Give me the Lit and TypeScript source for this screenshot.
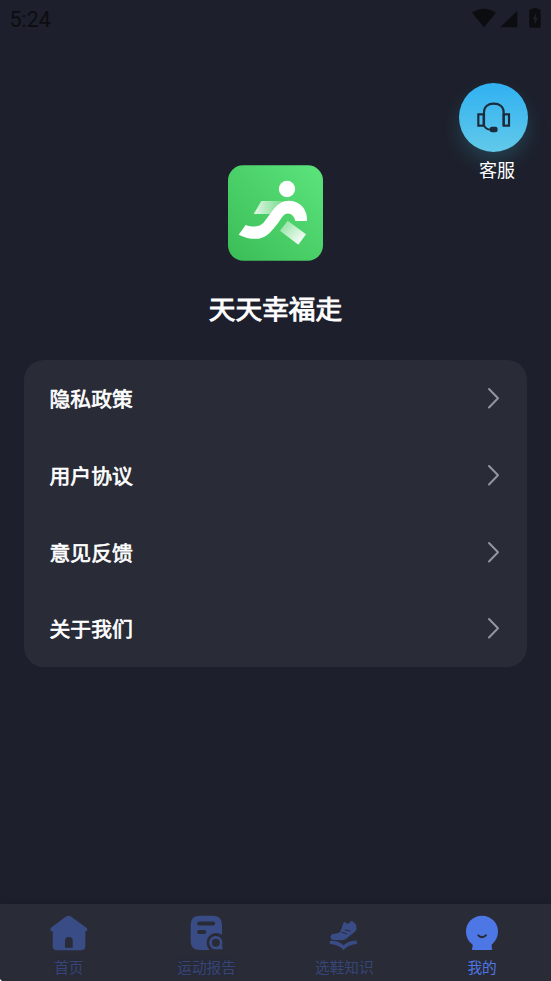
import { LitElement, html, css, svg } from "lit";
import { customElement } from "lit/decorators.js";
import { classMap } from "lit/directives/class-map.js";

const homeIcon = svg`<svg class="glyph" viewBox="138 60 138 108" fill="currentColor">
  <path fill-rule="evenodd" d="M199 64Q207 60 214 65L259 98Q264 103 261 107Q259 109 256 108V153Q256 166 243 166H171Q158 166 158 153V108Q154 110 152 107Q149 102 155 97ZM195 158H218V137Q218 126 206.500 126Q195 126 195 137Z"/>
</svg>`;

const reportIcon = svg`<svg class="glyph" viewBox="138 60 138 108" fill="none">
  <path fill="currentColor" d="M186 62H224Q252 62 252 90V119Q244 113 232 114Q208 118 206 142Q206 156 215 165H186Q158 165 158 137V90Q158 62 186 62Z"/>
  <path d="M183.500 85.500H225.500M183.500 111H199" stroke="#292b37" stroke-width="12" stroke-linecap="round"/>
  <circle cx="233.500" cy="143" r="16" stroke="currentColor" stroke-width="8"/>
  <path fill="currentColor" d="M251 145L254 163H233Q248 161 251 145Z"/>
</svg>`;

const shoeIcon = svg`<svg class="glyph" viewBox="135.500 60 138 108" fill="none">
  <path fill="currentColor" d="M204 81Q206 80 208 82Q216 91 223 81Q226 77 230 79L240 88Q242 92 242 101Q242 106 237 110L211 131Q206 136 195 136L174 135Q164 134 164 126Q165 117 173 117L188 114Q193 112 197 101Z"/>
  <path d="M208 105L222 108M198 112L212 116" stroke="#292b37" stroke-width="3" stroke-linecap="round"/>
  <path fill="currentColor" d="M162 137Q190 136 203 151Q216 136 243 137V147Q218 148 203 165Q188 148 162 147Z"/>
</svg>`;

const faceIcon = svg`<svg class="glyph" viewBox="135 60 138 108" fill="none">
  <path fill="currentColor" d="M204 62C231 62 252 83 252 108C252 126 245 138 233 149V157L235 163Q235 165 231 165H177Q173 165 174 162L176 154V149C163 139 156 126 156 108C156 83 177 62 204 62Z"/>
  <path d="M193 121Q204 132 216 121" stroke="#292b37" stroke-width="6" stroke-linecap="round"/>
</svg>`;

@customElement("status-bar")
class StatusBar extends LitElement {
  static styles = css`
    :host {
      display: flex;
      height: 38px;
      box-sizing: border-box;
      padding: 0 9px 0 9.500px;
      align-items: center;
      justify-content: space-between;
      color: #0c0d11;
      font: 400 21.4px/38px Roboto, sans-serif;
    }
    .time { padding-top: 1px; }
    .signals { width: 70px; height: 22px; display: block; }
  `;
  render() {
    return html`<span class="time">5:24</span>
      <svg class="signals" viewBox="66 24 210 66" fill="currentColor">
        <path d="M66 38Q101 14 138 38L102 82Z" />
        <path d="M202 32V82H151Z" />
        <path fill-rule="evenodd" d="M247 24.500H263V28H268Q272 28 272 32V79Q272 83 268 83H242Q238 83 238 79V32Q238 28 242 28H247ZM258 38L248 58H254V74L263 53H257Z" />
      </svg>`;
  }
}

@customElement("tab-bar")
class TabBar extends LitElement {
  static styles = css`
    :host {
      display: grid;
      grid-template-columns: repeat(4, 1fr);
      height: 76.600px;
      background: #292b37;
      box-shadow: 0 -1px 5px rgba(20, 22, 31, 0.45);
    }
    .tab {
      display: flex;
      flex-direction: column;
      align-items: center;
      padding-top: 10.600px;
      color: #3a4c86;
      font-size: 14.7px;
      line-height: 20px;
    }
    .tab.active { color: #4e77e6; }
    .label { margin-top: 6px; opacity: 0.82; }
    .active .label { opacity: 1; }
    .glyph { width: 46px; height: 36px; display: block; }
  `;
  private tabs = [
    { label: "首页", icon: homeIcon, active: false },
    { label: "运动报告", icon: reportIcon, active: false },
    { label: "选鞋知识", icon: shoeIcon, active: false },
    { label: "我的", icon: faceIcon, active: true },
  ];
  render() {
    return this.tabs.map(
      (t) => html`<div class=${classMap({ tab: true, active: t.active })}>
        ${t.icon}<span class="label">${t.label}</span>
      </div>`
    );
  }
}

@customElement("app-root")
class AppRoot extends LitElement {
  static styles = css`
    :host {
      display: flex;
      flex-direction: column;
      height: 981px;
      background: #1d202c;
      color: #fff;
      font-family: "Noto Sans CJK SC", sans-serif;
      overflow: hidden;
      border-bottom-left-radius: 4px;
    }
    .header { display: grid; height: 322px; }
    .header > * { grid-area: 1 / 1; }
    .service {
      justify-self: end;
      align-self: start;
      margin: 45px 23px 0 0;
      width: 69px;
    }
    .disc {
      height: 69px;
      border-radius: 50%;
      background: linear-gradient(#30b1f2, #62c9e9);
      box-shadow: 0 10px 20px -2px rgba(67, 190, 225, 0.22);
    }
    .disc svg { display: block; width: 69px; height: 69px; }
    .service-label {
      display: block;
      padding-left: 7px;
      margin-top: 5px;
      text-align: center;
      font-size: 18px;
      line-height: 25px;
    }
    .brand {
      display: flex;
      flex-direction: column;
      align-items: center;
      padding-top: 127px;
    }
    .logo { display: block; width: 95px; height: 96px; }
    .name {
      margin: 27px 0 0;
      font-size: 26.7px;
      line-height: 40px;
      font-weight: 400;
      -webkit-text-stroke: 0.9px #fff;
    }
    .menu {
      margin: 0 24.400px;
      border-radius: 20px;
      background: #292b37;
    }
    .row {
      display: flex;
      align-items: center;
      justify-content: space-between;
      height: 76.640px;
      padding: 0 27px 0 25.200px;
      font-size: 20.8px;
      -webkit-text-stroke: 0.7px #fff;
    }
    .chevron { width: 13px; height: 22px; }
    .spacer { flex: 1; }
  `;
  private items = ["隐私政策", "用户协议", "意见反馈", "关于我们"];
  render() {
    return html`
      <status-bar></status-bar>
      <div class="header">
        <div class="brand">
          <svg class="logo" viewBox="24 21 285 288">
            <defs>
              <linearGradient id="tile" x1="0" y1="1" x2="1" y2="0">
                <stop offset="0" stop-color="#3bbd56" />
                <stop offset="1" stop-color="#5ce47c" />
              </linearGradient>
              <linearGradient id="arm" x1="0" y1="0" x2="1" y2="0">
                <stop offset="0" stop-color="#fff" stop-opacity="0.85" />
                <stop offset="1" stop-color="#fff" stop-opacity="0.2" />
              </linearGradient>
              <linearGradient id="leg" x1="0" y1="0" x2="1" y2="1">
                <stop offset="0.1" stop-color="#fff" stop-opacity="0.4" />
                <stop offset="0.8" stop-color="#fff" stop-opacity="0.92" />
              </linearGradient>
            </defs>
            <rect x="24" y="22" width="285" height="286" rx="46" fill="url(#tile)" />
            <path d="M124 129H192L152 168H101Z" fill="url(#arm)" />
            <path d="M203 188L258 229L235 260L180 218Z" fill="url(#leg)" />
            <circle cx="201" cy="93" r="24.500" fill="#fff" />
            <path fill="#fff" d="M77 201C98 208 117 208 130 195L163 151Q181 128 205 128C242 128 263 155 261 189H226C224 174 209 161 195 169C187 174 183 184 175 194L159 214Q139 239 117 242Q86 245 56 230Z" />
          </svg>
          <h1 class="name">天天幸福走</h1>
        </div>
        <div class="service">
          <div class="disc">
            <svg viewBox="57 39 207 207" fill="none" stroke="#1b2b3a" stroke-width="6.500">
              <path d="M132 133V127C132 109 145 101 161 101C178 101 191 110 191 127V133V167M132 133V166" />
              <rect x="115" y="133" width="16" height="34" />
              <rect x="191" y="133" width="16" height="34" />
              <path d="M132 166Q137 178 152 179" stroke-width="5.500" />
              <rect x="149" y="170" width="24" height="17" rx="7" fill="#1b2b3a" stroke="none" />
            </svg>
          </div>
          <span class="service-label">客服</span>
        </div>
      </div>
      <div class="menu">
        ${this.items.map(
          (label) => html`<div class="row">
            <span>${label}</span>
            <svg class="chevron" viewBox="0 0 13 22" fill="none" stroke="#93959c" stroke-width="2" stroke-linecap="round" stroke-linejoin="round">
              <path d="M2 2L11 11.300L2 20.500" />
            </svg>
          </div>`
        )}
      </div>
      <div class="spacer"></div>
      <tab-bar></tab-bar>
    `;
  }
}
